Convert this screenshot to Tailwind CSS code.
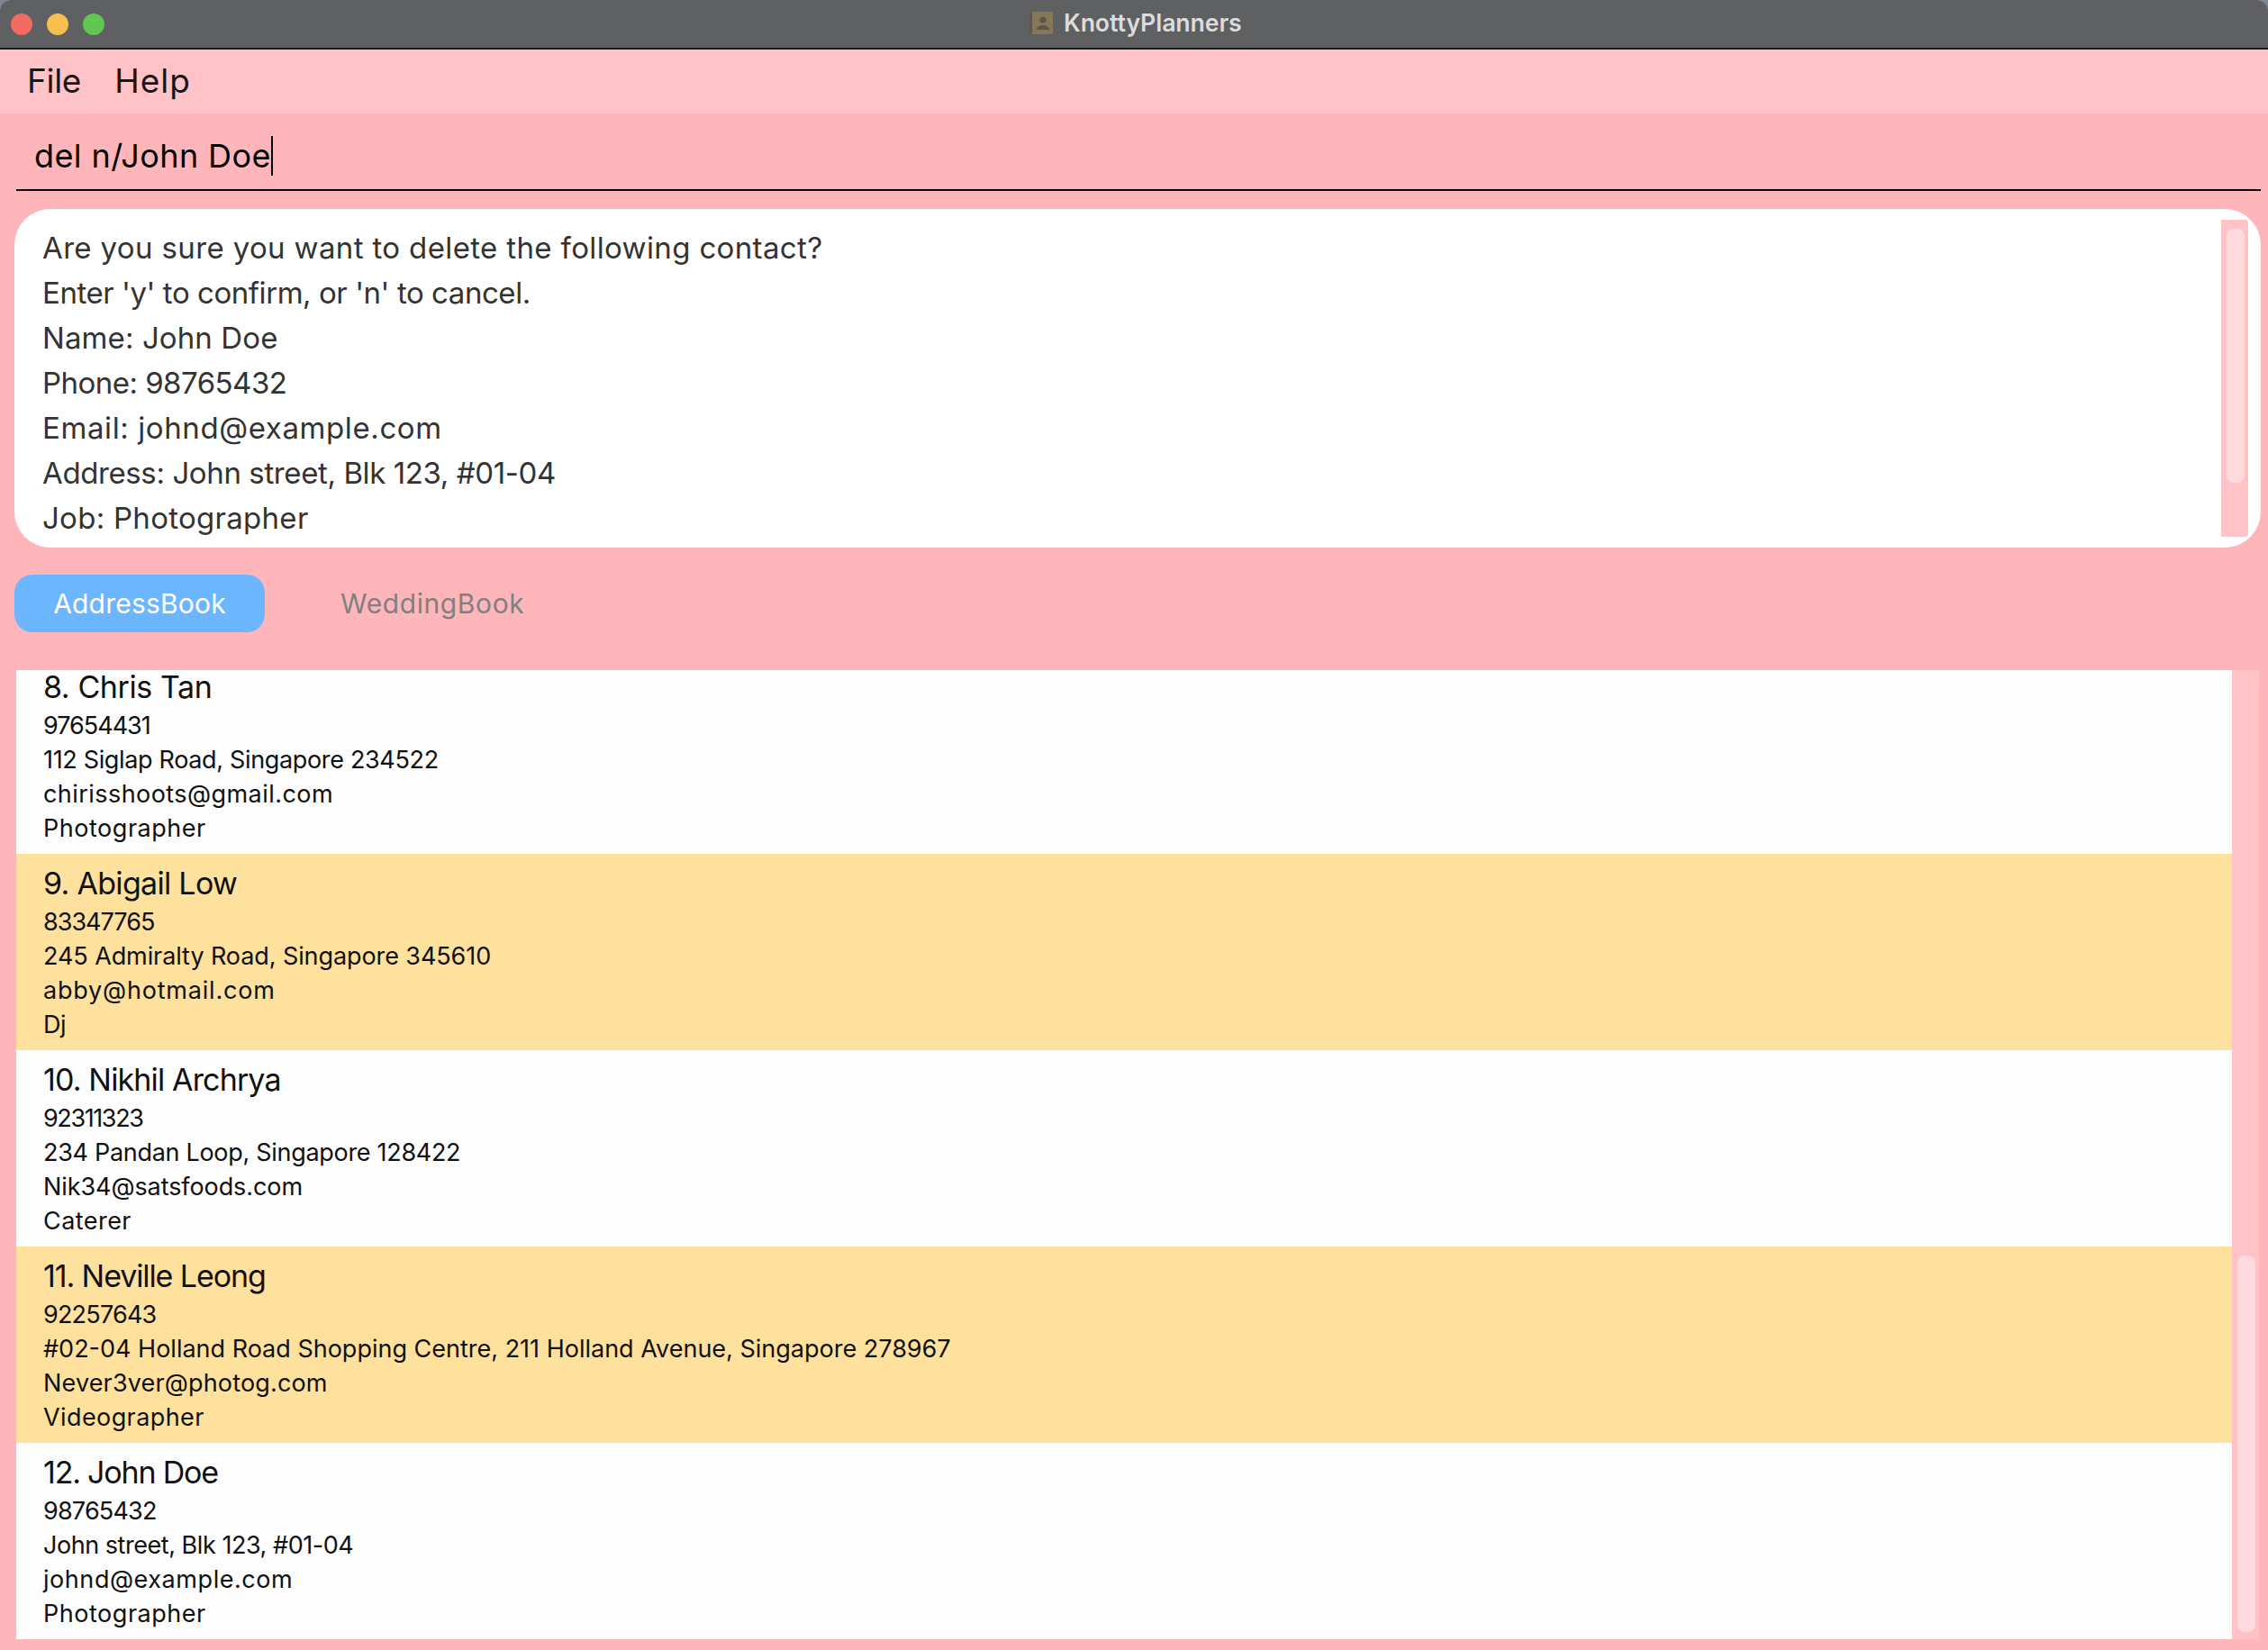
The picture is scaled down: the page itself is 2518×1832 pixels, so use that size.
<!DOCTYPE html>
<html lang="en">
<head>
    <meta charset="UTF-8">
    <title>KnottyPlanners</title>
    <script src="https://cdn.jsdelivr.net/npm/@tailwindcss/browser@4"></script>
</head>
<body class="bg-[#7d8794] overflow-hidden font-['Inter','Noto_Sans',sans-serif]">
    <div class="w-[2518px] h-[1832px] flex flex-col bg-[#ffb6bb] rounded-t-[12px] overflow-hidden">
        <!-- title bar -->
        <div class="h-[55px] shrink-0 bg-[#5f6062] border-b-2 border-[#1c1c1e] flex items-center relative">
            <div class="flex gap-[16px] pl-[12px]">
                <span class="w-[24px] h-[24px] rounded-full bg-[#f26b60]"></span>
                <span class="w-[24px] h-[24px] rounded-full bg-[#f6c051]"></span>
                <span class="w-[24px] h-[24px] rounded-full bg-[#62c654]"></span>
            </div>
            <div class="absolute left-[1143px] top-[12px] flex items-center gap-[12px]">
                <svg width="26" height="25" viewBox="0 0 26 25">
                    <rect width="26" height="25" rx="1" fill="#857858"/>
                    <rect width="3" height="25" fill="#5f5a4c"/>
                    <circle cx="15" cy="9" r="3.6" fill="#5c5648"/>
                    <path d="M8 20c0-3 3-4 5-5h4c2 1 5 2 5 5z" fill="#5c5648"/>
                </svg>
                <span class="text-[26.5px] leading-[26px] font-semibold text-[#dcdcdc]">KnottyPlanners</span>
            </div>
        </div>
        <!-- menu bar -->
        <div class="h-[71px] shrink-0 bg-[#ffc2c7] flex items-center gap-[37px] pl-[30px] pb-[2px] text-[37px] text-[#1d1416]">
            <span class="tracking-[-0.3px]">File</span>
            <span class="tracking-[1px]">Help</span>
        </div>
        <!-- command box -->
        <div class="ml-[18px] mr-[8px] h-[86px] shrink-0 border-b-2 border-black flex items-center pl-[20px] pt-[10px] text-[36px] tracking-[0.4px] text-black">
            <span>del n/John Doe</span><span class="w-[2px] h-[44px] bg-black"></span>
        </div>
        <!-- result display -->
        <div class="mt-[20px] ml-[16px] mr-[8px] h-[376px] shrink-0 bg-white rounded-[40px] flex justify-between pl-[31px] pr-[14px] pt-[18px] overflow-hidden">
            <div class="text-[33px] leading-[50px] text-[#333333]">
                <p class="tracking-[0.36px]">Are you sure you want to delete the following contact?</p>
                <p class="tracking-[-0.45px]">Enter 'y' to confirm, or 'n' to cancel.</p>
                <p class="tracking-[0.1px]">Name: John Doe</p>
                <p class="tracking-[-0.53px]">Phone: 98765432</p>
                <p class="tracking-[0.6px]">Email: johnd@example.com</p>
                <p class="tracking-[-0.39px]">Address: John street, Blk 123, #01-04</p>
                <p class="tracking-[0.28px]">Job: Photographer</p>
            </div>
            <div class="w-[30px] h-[352px] -mt-[6px] bg-[#ffc2c7] rounded-r-[4px] pl-[6px] pr-[4px] pt-[10px]">
                <div class="h-[282px] bg-[#fed9dd] rounded-[8px]"></div>
            </div>
        </div>
        <!-- tabs -->
        <div class="mt-[30px] ml-[16px] flex items-center shrink-0">
            <div class="w-[278px] h-[64px] rounded-[20px] bg-[#6bb6ff] text-white text-[30px] tracking-[0.2px] flex items-center justify-center">AddressBook</div>
            <div class="ml-[84px] text-[30px] tracking-[0.6px] text-[#808080]">WeddingBook</div>
        </div>
        <!-- person list -->
        <div class="mt-[42px] ml-[18px] mr-[10px] h-[1076px] shrink-0 flex">
            <div class="flex-1 bg-[#fdfdfd] text-[#111111]">
                <div class="h-[204px] pl-[30px] bg-[#fdfdfd]">
                    <p class="text-[34px] leading-[38px] tracking-[-0.4px]">8. Chris Tan</p>
                    <div class="text-[27px] leading-[38px] mt-[5px]">
                        <p class="tracking-[-1px]">97654431</p>
                        <p class="tracking-[-0.34px]">112 Siglap Road, Singapore 234522</p>
                        <p class="tracking-[0.44px]">chirisshoots@gmail.com</p>
                        <p class="tracking-[0.53px]">Photographer</p>
                    </div>
                </div>
                <div class="h-[218px] pl-[30px] pt-[10px] bg-[#ffe19e]">
                    <p class="text-[34px] leading-[46px] tracking-[-0.7px]">9. Abigail Low</p>
                    <div class="text-[27px] leading-[38px] mt-[1px]">
                        <p class="tracking-[-1px]">83347765</p>
                        <p class="tracking-[-0.09px]">245 Admiralty Road, Singapore 345610</p>
                        <p class="tracking-[0.8px]">abby@hotmail.com</p>
                        <p class="tracking-[-0.5px]">Dj</p>
                    </div>
                </div>
                <div class="h-[218px] pl-[30px] pt-[10px] bg-[#fdfdfd]">
                    <p class="text-[34px] leading-[46px] tracking-[-0.85px]">10. Nikhil Archrya</p>
                    <div class="text-[27px] leading-[38px] mt-[1px]">
                        <p class="tracking-[-1.4px]">92311323</p>
                        <p class="tracking-[-0.3px]">234 Pandan Loop, Singapore 128422</p>
                        <p class="tracking-[-0.08px]">Nik34@satsfoods.com</p>
                        <p class="tracking-[0.45px]">Caterer</p>
                    </div>
                </div>
                <div class="h-[218px] pl-[30px] pt-[10px] bg-[#ffe19e]">
                    <p class="text-[34px] leading-[46px] tracking-[-1.1px]">11. Neville Leong</p>
                    <div class="text-[27px] leading-[38px] mt-[1px]">
                        <p class="tracking-[-0.8px]">92257643</p>
                        <p>#02-04 Holland Road Shopping Centre, 211 Holland Avenue, Singapore 278967</p>
                        <p class="tracking-[0.16px]">Never3ver@photog.com</p>
                        <p class="tracking-[0.4px]">Videographer</p>
                    </div>
                </div>
                <div class="h-[218px] pl-[30px] pt-[10px] bg-[#fdfdfd]">
                    <p class="text-[34px] leading-[46px] tracking-[-1.2px]">12. John Doe</p>
                    <div class="text-[27px] leading-[38px] mt-[1px]">
                        <p class="tracking-[-0.8px]">98765432</p>
                        <p class="tracking-[-0.46px]">John street, Blk 123, #01-04</p>
                        <p class="tracking-[0.56px]">johnd@example.com</p>
                        <p class="tracking-[0.53px]">Photographer</p>
                    </div>
                </div>
            </div>
            <div class="w-[30px] bg-[#ffc2c7] pl-[6px] pr-[4px] pt-[650px]">
                <div class="h-[418px] bg-[#fed9dd] rounded-[8px]"></div>
            </div>
        </div>
    </div>
</body>
</html>
